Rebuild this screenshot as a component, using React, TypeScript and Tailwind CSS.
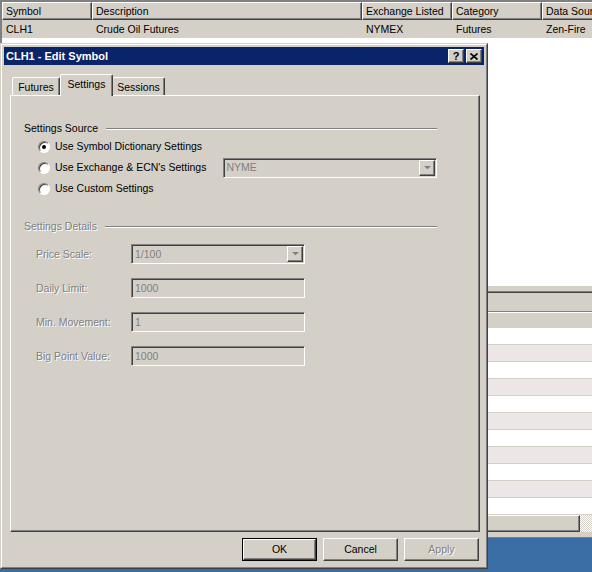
import React from "react";

const raised =
  "border border-t-white border-l-white border-r-[#404040] border-b-[#404040] shadow-[inset_-1px_-1px_0_#808080]";
const sunken =
  "border border-t-[#808080] border-l-[#808080] border-r-white border-b-white shadow-[inset_1px_1px_0_#404040,inset_-1px_-1px_0_#d4d0c8]";
const disabledText = "text-[#808080] [text-shadow:1px_1px_0_#fff]";

function HeaderCell({ label, width }: { label: string; width: string }) {
  return (
    <div className={`${width} h-full shrink-0 ${raised} pl-[3px] flex items-center whitespace-nowrap overflow-hidden`}>
      {label}
    </div>
  );
}

function Radio({ checked }: { checked?: boolean }) {
  return (
    <span className="w-3 h-3 rounded-full shrink-0 border border-t-[#808080] border-l-[#808080] border-r-white border-b-white bg-white shadow-[inset_1px_1px_0_#404040] flex items-center justify-center">
      {checked && <span className="w-[4px] h-[4px] rounded-full bg-black" />}
    </span>
  );
}

function DropArrow() {
  return (
    <div className={`w-4 h-4 bg-[#d4d0c8] ${raised} flex items-center justify-center`}>
      <svg width="7" height="4" viewBox="0 0 7 4">
        <path d="M1 1h5L3.5 3.5z" fill="#fff" />
        <path d="M0 0h7L3.5 3.5z" fill="#808080" />
      </svg>
    </div>
  );
}

function Combo({ value, width }: { value: string; width: string }) {
  return (
    <div className={`${width} h-5 ${sunken} bg-[#d4d0c8] flex items-center justify-between pl-[3px] pr-[1px]`}>
      <span className="text-[#808080]">{value}</span>
      <DropArrow />
    </div>
  );
}

function Field({ label, value, combo }: { label: string; value: string; combo?: boolean }) {
  return (
    <div className="flex items-center h-5 mb-[14px] pl-[12px]">
      <span className={`w-[95px] ${disabledText}`}>{label}</span>
      {combo ? (
        <Combo value={value} width="w-[174px]" />
      ) : (
        <div className={`w-[174px] h-5 ${sunken} bg-[#d4d0c8] flex items-center pl-[3px] text-[#808080]`}>
          {value}
        </div>
      )}
    </div>
  );
}

function GroupTitle({ label, muted }: { label: string; muted?: boolean }) {
  return (
    <div className="flex items-center h-[13px]">
      <span className={muted ? disabledText : ""}>{label}</span>
      <div className="flex-1 ml-[8px] h-[2px] border-t border-t-[#808080] border-b border-b-white" />
    </div>
  );
}

function DialogButton({ label, primary, disabled }: { label: string; primary?: boolean; disabled?: boolean }) {
  return (
    <div className={`w-[75px] h-[23px] ${primary ? "border border-black" : ""}`}>
      <div className={`w-full h-full ${raised} flex items-center justify-center ${disabled ? disabledText : ""}`}>
        {label}
      </div>
    </div>
  );
}

export default function App() {
  const rows = Array.from({ length: 11 }, (_, i) => i);
  return (
    <div className="w-[592px] h-[572px] relative overflow-hidden bg-white text-[10.5px] leading-[13px] text-black font-['Liberation_Sans',sans-serif]">
      {/* background grid */}
      <div className="flex flex-col h-full">
        <div className="h-[285px] flex flex-col border-l-2 border-t-2 border-[#808080]">
          <div className="h-[18px] flex bg-[#d4d0c8]">
            <HeaderCell label="Symbol" width="w-[90px]" />
            <HeaderCell label="Description" width="w-[270px]" />
            <HeaderCell label="Exchange Listed" width="w-[90px]" />
            <HeaderCell label="Category" width="w-[90px]" />
            <HeaderCell label="Data Source" width="w-[90px]" />
          </div>
          <div className="h-[18px] flex items-center bg-[#d4d0c8]">
            <span className="w-[90px] shrink-0 pl-[4px]">CLH1</span>
            <span className="w-[270px] shrink-0 pl-[4px]">Crude Oil Futures</span>
            <span className="w-[90px] shrink-0 pl-[4px]">NYMEX</span>
            <span className="w-[90px] shrink-0 pl-[4px]">Futures</span>
            <span className="w-[90px] shrink-0 pl-[4px] whitespace-nowrap">Zen-Fire</span>
          </div>
          <div className="flex-1 bg-white" />
        </div>
        <div className="h-[1px] bg-white" />
        <div className="h-[5px] bg-[#d4d0c8]" />
        <div className="h-[2px] border-t border-t-[#808080] border-b border-b-[#404040]" />
        <div className="h-[18px] bg-[#d4d0c8]" />
        <div className="h-[1px] bg-[#808080]" />
        <div className="h-[1px] bg-white" />
        <div className="h-[15px] bg-[#d4d0c8]" />
        {rows.map((i) => (
          <div
            key={i}
            className={`h-[17px] border-b border-[#d4d0c8] ${i % 2 === 1 ? "bg-[#ede6e6]" : "bg-white"}`}
          />
        ))}
        <div className="h-[17px] flex bg-[#d4d0c8]">
          <div className={`flex-1 ${raised}`} />
          <div className="w-[12px] bg-[repeating-conic-gradient(#d4d0c8_0_25%,#fff_0_50%)] bg-[length:2px_2px]" />
        </div>
        <div className="h-[5px] bg-[#d4d0c8]" />
        <div className="flex-1 bg-[#3a6ea5] border-t border-[#5a86b5]" />
      </div>

      {/* dialog window */}
      <div className="absolute left-0 top-[43px] w-[488px] h-[526px] bg-[#d4d0c8] border border-t-[#d4d0c8] border-l-[#d4d0c8] border-r-[#404040] border-b-[#404040]">
        <div className="w-full h-full border border-t-white border-l-white border-r-[#808080] border-b-[#808080] p-[2px] flex flex-col">
          <div className="h-[18px] bg-[#0a246a] flex items-center justify-between pl-[2px] pr-[2px]">
            <span className="text-white font-bold text-[11px]">CLH1 - Edit Symbol</span>
            <div className="flex gap-[2px]">
              <div className={`w-4 h-[14px] bg-[#d4d0c8] ${raised} flex items-center justify-center font-bold leading-none text-[11px]`}>
                ?
              </div>
              <div className={`w-4 h-[14px] bg-[#d4d0c8] ${raised} flex items-center justify-center`}>
                <svg width="8" height="7" viewBox="0 0 8 7">
                  <path d="M0.5 0.5L7.5 6.5M7.5 0.5L0.5 6.5" stroke="#000" strokeWidth="1.6" />
                </svg>
              </div>
            </div>
          </div>

          {/* tabs */}
          <div className="mt-[9px] h-[21px] flex items-end pl-[8px]">
            <div className="w-[48px] h-[18px] border-t border-l border-t-white border-l-white border-r border-r-[#404040] shadow-[inset_-1px_0_0_#808080] rounded-t-[2px] flex items-center justify-center pt-[2px]">
              Futures
            </div>
            <div className="w-[53px] h-[22px] mb-[-1px] relative z-10 bg-[#d4d0c8] border-t border-l border-t-white border-l-white border-r border-r-[#404040] shadow-[inset_-1px_0_0_#808080] rounded-t-[2px] flex items-center justify-center pb-[2px]">
              Settings
            </div>
            <div className="w-[52px] h-[18px] border-t border-t-white border-r border-r-[#404040] shadow-[inset_-1px_0_0_#808080] rounded-t-[2px] flex items-center justify-center pt-[2px]">
              Sessions
            </div>
          </div>

          {/* panel */}
          <div className={`h-[437px] ml-[6px] mr-[4px] ${raised} pt-[26px] pl-[13px] pr-[42px]`}>
            <GroupTitle label="Settings Source" />
            <div className="mt-[1px] pl-[14px]">
              <div className="h-[21px] flex items-center gap-[5px]">
                <Radio checked />
                <span>Use Symbol Dictionary Settings</span>
              </div>
              <div className="h-[21px] flex items-center">
                <div className="w-[185px] flex items-center gap-[5px]">
                  <Radio />
                  <span>Use Exchange &amp; ECN's Settings</span>
                </div>
                <Combo value="NYME" width="w-[215px]" />
              </div>
              <div className="h-[21px] flex items-center gap-[5px]">
                <Radio />
                <span>Use Custom Settings</span>
              </div>
            </div>

            <div className="mt-[21px]">
              <GroupTitle label="Settings Details" muted />
            </div>
            <div className="mt-[11px]">
              <Field label="Price Scale:" value="1/100" combo />
              <Field label="Daily Limit:" value="1000" />
              <Field label="Min. Movement:" value="1" />
              <Field label="Big Point Value:" value="1000" />
            </div>
          </div>

          {/* buttons */}
          <div className="mt-[6px] flex justify-end gap-[6px] pr-[5px]">
            <DialogButton label="OK" primary />
            <DialogButton label="Cancel" />
            <DialogButton label="Apply" disabled />
          </div>
        </div>
      </div>
    </div>
  );
}
